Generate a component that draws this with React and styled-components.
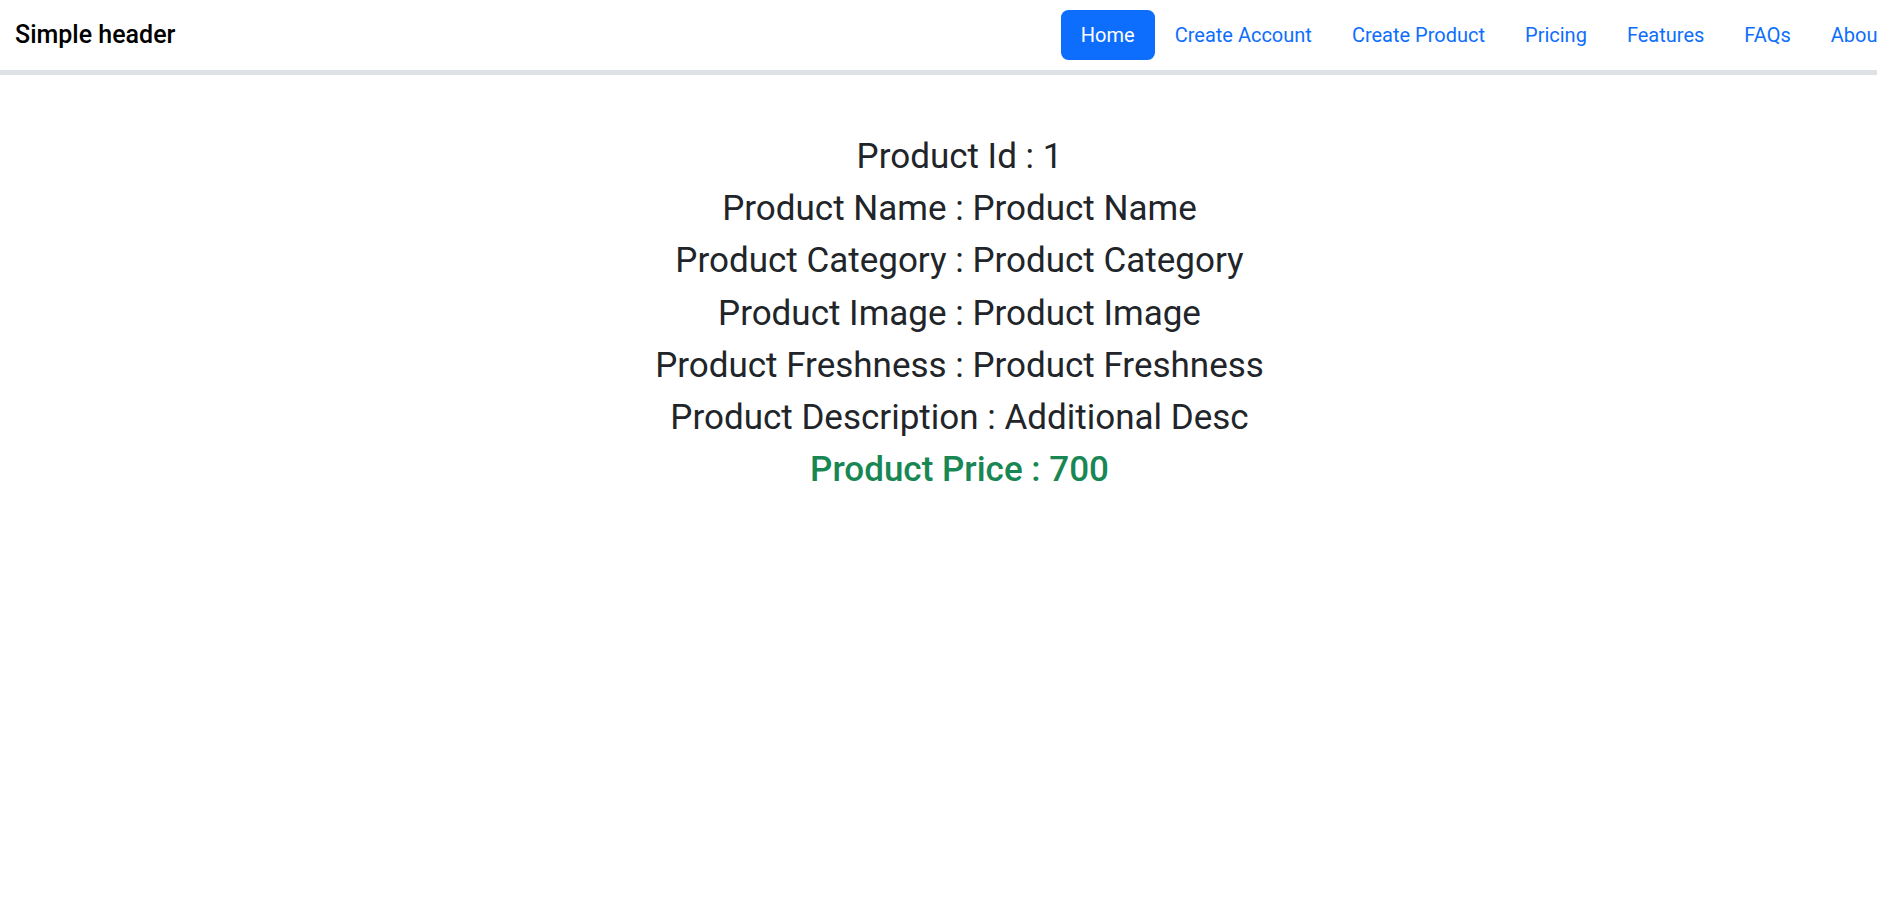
import React from "react";
import styled, { createGlobalStyle } from "styled-components";

const GlobalStyle = createGlobalStyle`
  html, body {
    margin: 0;
    padding: 0;
    background: #ffffff;
    overflow-x: hidden;
  }
  body {
    font-family: Roboto, "Liberation Sans", Arial, sans-serif;
    color: #212529;
  }
  * { box-sizing: border-box; }
`;

const Viewport = styled.div`
  width: 100%;
  min-height: 920px;
  overflow: hidden;
`;

const Page = styled.div`
  width: calc(100% + 42px);
`;

const Header = styled.header`
  display: flex;
  align-items: center;
  padding: 10px 15px;
  border-bottom: 5px solid #dee2e6;
  background: #ffffff;
`;

const Brand = styled.a`
  font-size: 25px;
  line-height: 36px;
  font-weight: 500;
  color: #000000;
  text-decoration: none;
  margin-right: auto;
  white-space: nowrap;
`;

const Nav = styled.nav`
  display: flex;
  flex-shrink: 0;
`;

const NavLink = styled.a`
  display: block;
  padding: 10px 20px;
  font-size: 20px;
  line-height: 30px;
  border-radius: 7.5px;
  text-decoration: none;
  white-space: nowrap;
  color: ${(p) => (p.$active ? "#ffffff" : "#0d6efd")};
  background: ${(p) => (p.$active ? "#0d6efd" : "transparent")};
`;

const Main = styled.main`
  display: flex;
  flex-direction: column;
  align-items: center;
  padding-top: 61px;
`;

const Line = styled.h3`
  margin: 0 0 10px;
  font-size: 35px;
  line-height: 42.2px;
  font-weight: ${(p) => (p.$price ? 500 : 400)};
  color: ${(p) => (p.$price ? "#198754" : "#212529")};
  text-align: center;
`;

const links = [
  "Home",
  "Create Account",
  "Create Product",
  "Pricing",
  "Features",
  "FAQs",
  "About",
];

const details = [
  ["Product Id", "1"],
  ["Product Name", "Product Name"],
  ["Product Category", "Product Category"],
  ["Product Image", "Product Image"],
  ["Product Freshness", "Product Freshness"],
  ["Product Description", "Additional Desc"],
];

export default function App() {
  return (
    <Viewport>
      <GlobalStyle />
      <Page>
        <Header>
          <Brand href="#">Simple header</Brand>
          <Nav>
            {links.map((l, i) => (
              <NavLink key={l} href="#" $active={i === 0}>
                {l}
              </NavLink>
            ))}
          </Nav>
        </Header>
        <Main>
          {details.map(([k, v]) => (
            <Line key={k}>
              {k} : {v}
            </Line>
          ))}
          <Line $price>Product Price : 700</Line>
        </Main>
      </Page>
    </Viewport>
  );
}
